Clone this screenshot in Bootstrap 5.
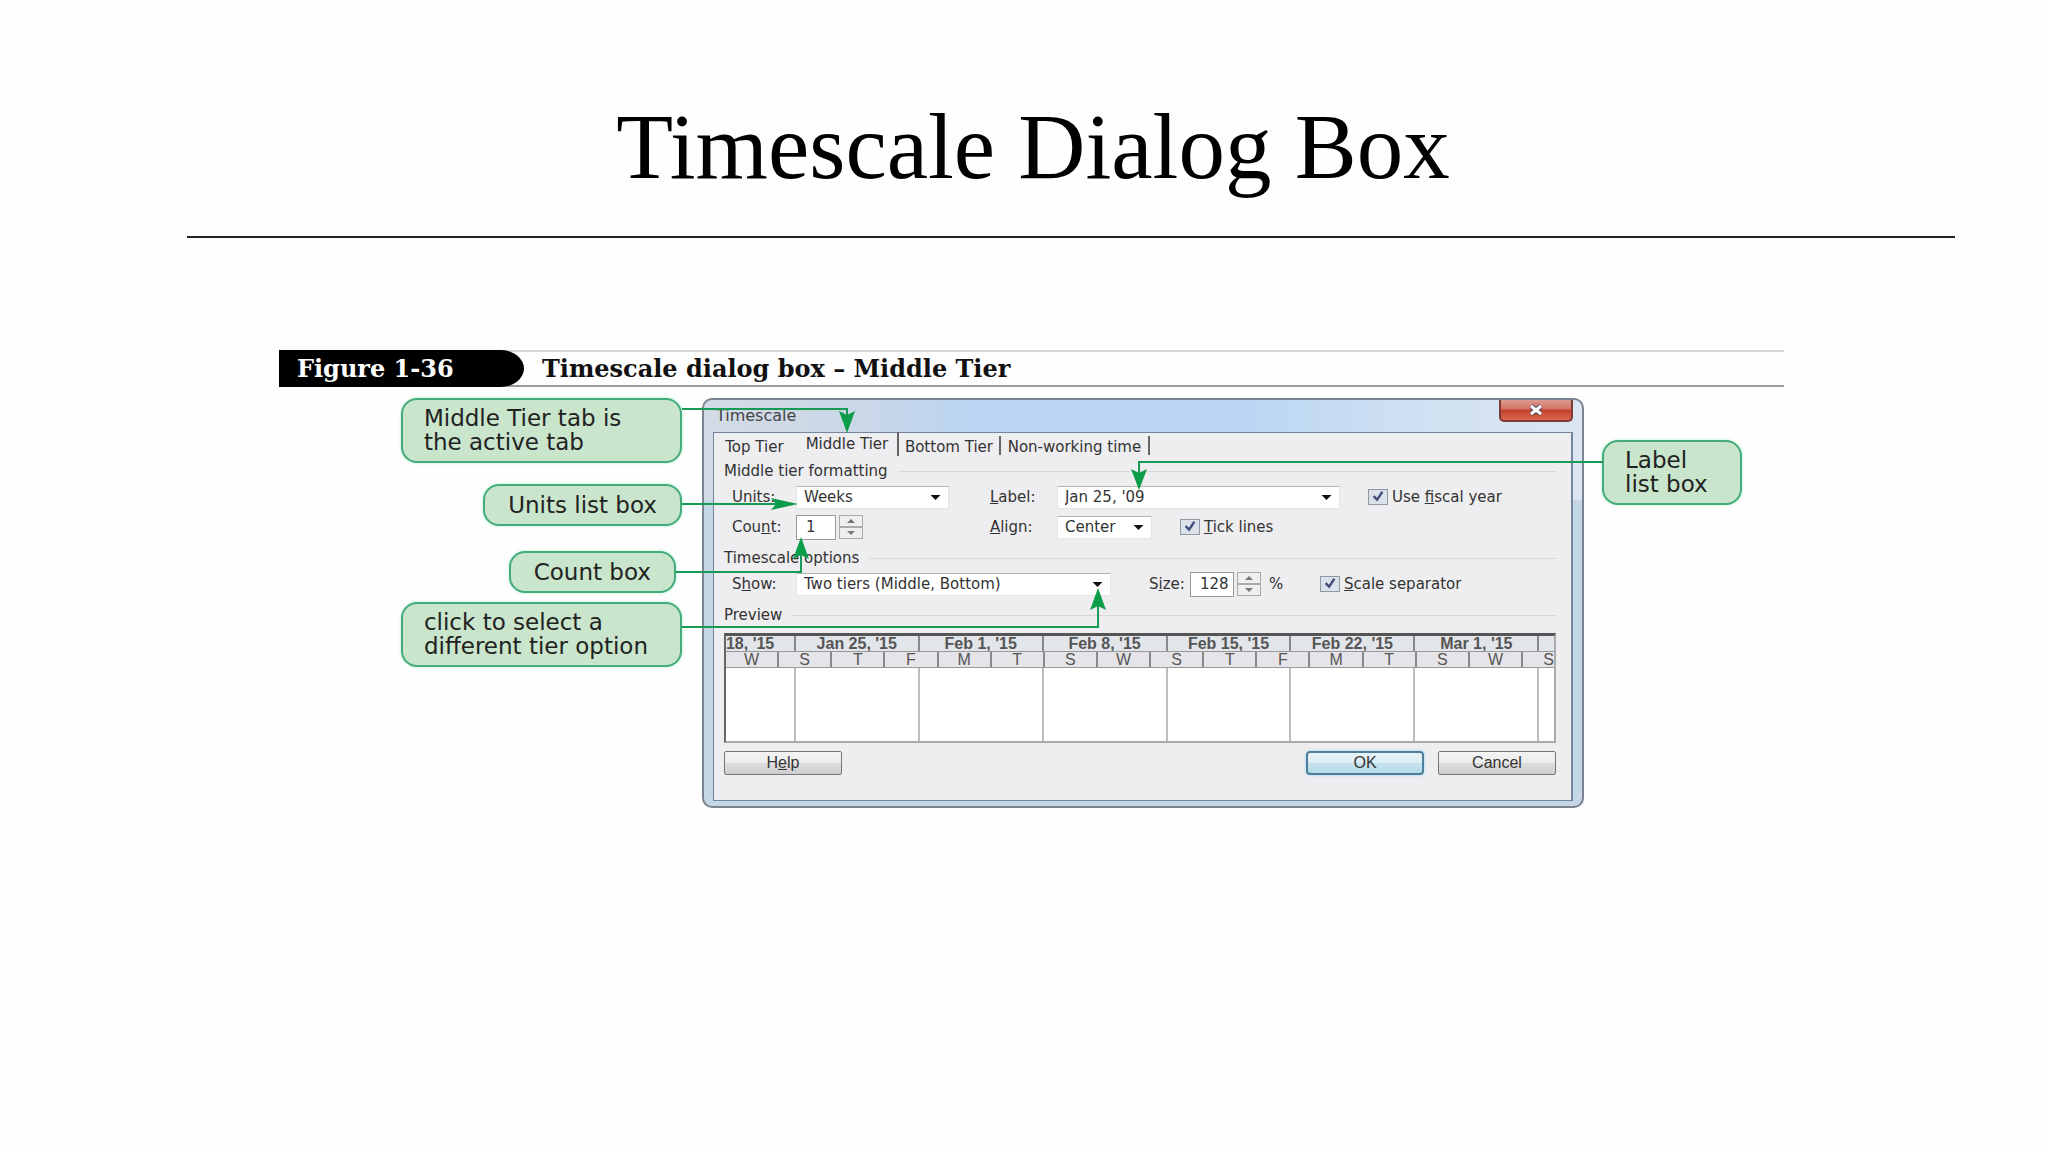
<!DOCTYPE html>
<html lang="en">
<head>
<meta charset="utf-8">
<meta name="viewport" content="width=device-width, initial-scale=1">
<title>Timescale Dialog Box</title>
<link href="https://cdn.jsdelivr.net/npm/bootstrap@5.3.0/dist/css/bootstrap.min.css" rel="stylesheet">
<style>
body{background:#fefefe;color:#000;font-family:"DejaVu Sans",sans-serif}
.slide-head{margin:0 4.54% 0 9.13%;padding:91px 76px 33px 0;border-bottom:2px solid #222}
.slide-head h1{font:400 93px/112px "Liberation Serif",serif}
.fig{margin:112px 12.89% 0 13.62%}
.fig-bar{height:37px;border-top:2px solid #d6d6d6;border-bottom:2px solid #9b9b9b;margin-bottom:11px;font:700 24px/33px "DejaVu Serif",serif;color:#111}
.fig-no{width:245px;margin:-2px 18px -2px 0;padding:2px 0 0 18px;background:#000;color:#fff;border-radius:0 24px 24px 0/0 19px 19px 0}
.fig-body{padding:0 42px 0 122px}
.stage{color:#333}
.notes{width:281px;margin-right:20px}
.notes-right{width:140px;margin:42px 0 0 18px}
.note{border:2px solid #45ab7c;border-radius:16px;background:#c9e5cc;box-shadow:0 0 3px #a5f3c8;color:#222;font-size:23px;line-height:24px;padding:7px 23px}
.note-wide,.note-label{padding:6px 0 7px 21px}
.note-mid{margin-top:21px}
.note-count{margin:25px 6px 9px 0}
.wires{left:0;top:0;width:100%;height:410px;pointer-events:none}
.dlg{height:410px;min-width:0;border:2px solid #7b8391;border-radius:10px;background:linear-gradient(90deg,#d3dbe6 0,#cbd7e6 17%,#b9d5f3 32%,#b9d5f3 60%,#cfe0f2 80%,#dbe6f2 100%) top/100% 100px no-repeat,#c5d6e6;padding:0 9px 6px}
.dlg-title{height:32px;font-size:16px;line-height:32px;padding-left:3px;color:#444}
.dlg-close{width:74px;height:22px;border:2px solid #7d3c3a;border-top:0;border-radius:0 0 5px 5px;background:linear-gradient(#dd9a90 0,#d27466 45%,#c2402a 50%,#d9654b 100%);padding:0}
.dlg-close svg{display:block;margin:auto}
.client{background:#eeedf0;border:1px solid #75859d;border-right-width:2px;padding:0 15px 0 10px;font-size:15px;height:369px}
.tabs{height:25px;margin-left:-10px}
.tabs button{border:0;background:none;padding:2px 0 0;color:#333;height:19px;line-height:19px;border-right:2px solid #666}
.t-top{width:83px}.t-mid{width:102px}.t-bot{width:102px}.t-non{width:149px}
.tabs .t-top{border-right-color:transparent}
.tabs .t-mid{height:24px;padding:0;margin-top:-3px;line-height:20px}
.grp{height:20px;line-height:20px;margin:8px 0 3px;gap:10px}
.grp::after{content:"";flex:1;border-top:1px solid #d9d9dc}
.grp-first{margin-top:3px}
.frow{height:26px;padding-left:8px;margin-bottom:4px}
.lab{width:64px}
.form-select.pick{height:23px;border:1px solid #e4e4e6;border-top-color:#b5b5b8;border-radius:1px;background:#fff url("data:image/svg+xml,%3Csvg xmlns='http://www.w3.org/2000/svg' viewBox='0 0 12 6'%3E%3Cpath d='M0 0h12L6 6z' fill='%23111'/%3E%3C/svg%3E") no-repeat right 7px center/11px 5px;padding:0 20px 0 7px;font-size:15px;line-height:20px;color:#333}
.w-units{width:153px}.w-label{width:283px}.w-align{width:95px}.w-show{width:315px}
.lab-mid{width:67px;margin-left:41px}
.lab-align{margin-left:127px}
.lab-size{width:41px;margin-left:38px}
.num.form-control{width:40px;height:25px;border:1px solid #999;border-radius:0;background:#fff;font-size:15px;padding:0 0 0 9px;color:#333}
.num-size.form-control{width:44px}
.spin{width:24px;height:24px;margin-left:3px}
.spin button{height:12px;border:1px solid #aaa;background:#efeff1;padding:0}
.spin svg{display:block;margin:auto}
.pct{width:51px}
.tick.form-check-input{width:20px;height:16px;margin:0 4px 0 0;border:1px solid #9299a5;border-radius:0;background:#dbe1ea url("data:image/svg+xml,%3Csvg xmlns='http://www.w3.org/2000/svg' viewBox='0 0 20 16'%3E%3Cpath d='M5 7l4 4L15 2' fill='none' stroke='%23404c78' stroke-width='2.6'/%3E%3C/svg%3E") center/100% 100%}
.tick.tick-gap{margin-left:28px}
.chart{height:110px;margin-top:8px;border:2px solid #555;border-top-width:3px;border-left-color:#666;border-right-color:#aaa;border-bottom-color:#aaa;background:#fff;font:700 16px/16px "Liberation Sans",sans-serif;color:#555}
.chart span{overflow:hidden;white-space:nowrap;text-align:center;border-right:2px solid #bcbcc0}
.chart span:last-child{border-right:0}
.weeks,.days{height:16px;background:#e2e5e9;border-bottom:1px solid #999}
.chart .weeks span,.chart .days span{border-right-color:#888}
.days{font-weight:400;background:#e5e4e8}
.lanes{height:73px}
.c70{flex:69 1 0}.c124{flex:124 1 0}.c16{flex:15 1 0}.c53{flex:53 1 0}.c33{flex:32 1 0}
.chart .c70{text-align:left}
.chart .c33{text-align:right}
.acts{margin-top:8px;font-family:"Liberation Sans",sans-serif}
.act{width:118px;height:24px;padding:0;border:1px solid #777;border-radius:2px;background:linear-gradient(#f4f4f5 0,#ececed 48%,#dcdcde 52%,#cfcfd2);font-size:16px;line-height:20px;color:#333}
.act-ok{border:2px solid #4f7d9c;border-radius:4px;background:linear-gradient(#e8f2f6 0,#dceef5 48%,#c5e1ec 52%,#b4dbe9);box-shadow:0 0 3px #8edcf8;margin-right:14px}
</style>
<script src="https://cdn.jsdelivr.net/npm/bootstrap@5.3.0/dist/js/bootstrap.bundle.min.js"></script>
</head>
<body>
<header class="slide-head"><h1 class="m-0 text-center">Timescale Dialog Box</h1></header>
<main class="fig">
  <div class="fig-bar d-flex"><div class="fig-no">Figure 1-36</div><div>Timescale dialog box – Middle Tier</div></div>
  <div class="fig-body">
    <div class="stage position-relative d-flex align-items-start">
      <div class="notes d-flex flex-column align-items-end flex-shrink-0">
        <div class="note note-wide w-100">Middle Tier tab is<br>the active tab</div>
        <div class="note note-mid">Units list box</div>
        <div class="note note-count">Count box</div>
        <div class="note note-wide w-100">click to select a<br>different tier option</div>
      </div>
      <section class="dlg flex-grow-1" aria-label="Timescale">
        <div class="dlg-title d-flex justify-content-between"><span>Timescale</span>
          <button class="dlg-close" type="button" aria-label="Close"><svg width="16" height="12" viewBox="0 0 16 12"><path d="M3 2l10 8M13 2L3 10" stroke="#5b4760" stroke-width="5"/><path d="M3 2l10 8M13 2L3 10" stroke="#fff" stroke-width="3"/></svg></button>
        </div>
        <div class="client">
          <div class="tabs d-flex align-items-center" role="tablist">
            <button type="button" role="tab" class="t-top">Top Tier</button>
            <button type="button" role="tab" class="t-mid" aria-selected="true">Middle Tier</button>
            <button type="button" role="tab" class="t-bot">Bottom Tier</button>
            <button type="button" role="tab" class="t-non">Non-working time</button>
          </div>
          <div class="grp grp-first d-flex align-items-center">Middle tier formatting</div>
          <div class="frow d-flex align-items-center">
            <label class="lab" for="units"><u>U</u>nits:</label>
            <select id="units" class="form-select pick w-units"><option>Weeks</option></select>
            <label class="lab-mid" for="lbl"><u>L</u>abel:</label>
            <select id="lbl" class="form-select pick w-label"><option>Jan 25, '09</option></select>
            <input id="fiscal" type="checkbox" class="form-check-input tick tick-gap" checked><label for="fiscal">Use <u>f</u>iscal year</label>
          </div>
          <div class="frow d-flex align-items-center">
            <label class="lab" for="count">Cou<u>n</u>t:</label>
            <input id="count" type="text" class="form-control num" value="1">
            <div class="spin d-flex flex-column"><button type="button" aria-label="More"><svg width="8" height="4"><path d="M0 4h8L4 0z" fill="#777"/></svg></button><button type="button" aria-label="Less"><svg width="8" height="4"><path d="M0 0h8L4 4z" fill="#777"/></svg></button></div>
            <label class="lab-mid lab-align" for="align"><u>A</u>lign:</label>
            <select id="align" class="form-select pick w-align"><option>Center</option></select>
            <input id="ticks" type="checkbox" class="form-check-input tick tick-gap" checked><label for="ticks"><u>T</u>ick lines</label>
          </div>
          <div class="grp d-flex align-items-center">Timescale options</div>
          <div class="frow d-flex align-items-center">
            <label class="lab" for="show">S<u>h</u>ow:</label>
            <select id="show" class="form-select pick w-show"><option>Two tiers (Middle, Bottom)</option></select>
            <label class="lab-size" for="size">S<u>i</u>ze:</label>
            <input id="size" type="text" class="form-control num num-size" value="128">
            <div class="spin d-flex flex-column"><button type="button" aria-label="Larger"><svg width="8" height="4"><path d="M0 4h8L4 0z" fill="#777"/></svg></button><button type="button" aria-label="Smaller"><svg width="8" height="4"><path d="M0 0h8L4 4z" fill="#777"/></svg></button></div>
            <span class="pct ms-2">%</span>
            <input id="sep" type="checkbox" class="form-check-input tick" checked><label for="sep"><u>S</u>cale separator</label>
          </div>
          <div class="grp d-flex align-items-center">Preview</div>
          <div class="chart">
            <div class="weeks d-flex"><span class="c70">18, '15</span><span class="c124">Jan 25, '15</span><span class="c124">Feb 1, '15</span><span class="c124">Feb 8, '15</span><span class="c124">Feb 15, '15</span><span class="c124">Feb 22, '15</span><span class="c124">Mar 1, '15</span><span class="c16"></span></div>
            <div class="days d-flex"><span class="c53">W</span><span class="c53">S</span><span class="c53">T</span><span class="c53">F</span><span class="c53">M</span><span class="c53">T</span><span class="c53">S</span><span class="c53">W</span><span class="c53">S</span><span class="c53">T</span><span class="c53">F</span><span class="c53">M</span><span class="c53">T</span><span class="c53">S</span><span class="c53">W</span><span class="c33">S</span></div>
            <div class="lanes d-flex"><span class="c70"></span><span class="c124"></span><span class="c124"></span><span class="c124"></span><span class="c124"></span><span class="c124"></span><span class="c124"></span><span class="c16"></span></div>
          </div>
          <div class="acts d-flex"><button type="button" class="act me-auto">H<u>e</u>lp</button><button type="button" class="act act-ok">OK</button><button type="button" class="act">Cancel</button></div>
        </div>
      </section>
      <div class="notes-right flex-shrink-0"><div class="note note-label">Label<br>list box</div></div>
      <svg class="wires position-absolute" viewBox="0 0 1341 410" preserveAspectRatio="none" aria-hidden="true">
        <g fill="none" stroke="#169a55" stroke-width="2"><path d="M281 11H446V21"/><path d="M281 106H380"/><path d="M275 174H400V156"/><path d="M281 229H697V206"/><path d="M1202 64H738V77"/></g>
        <g fill="#0c9d4a"><path d="M446 35l-8-22 8 4 8-4z"/><path d="M397 106l-27-6 5 6-5 6z"/><path d="M400 139l-8 22 8-4 8 4z"/><path d="M697 190l-8 22 8-4 8 4z"/><path d="M738 92l-8-21 8 4 8-4z"/></g>
      </svg>
    </div>
  </div>
</main>
</body>
</html>
